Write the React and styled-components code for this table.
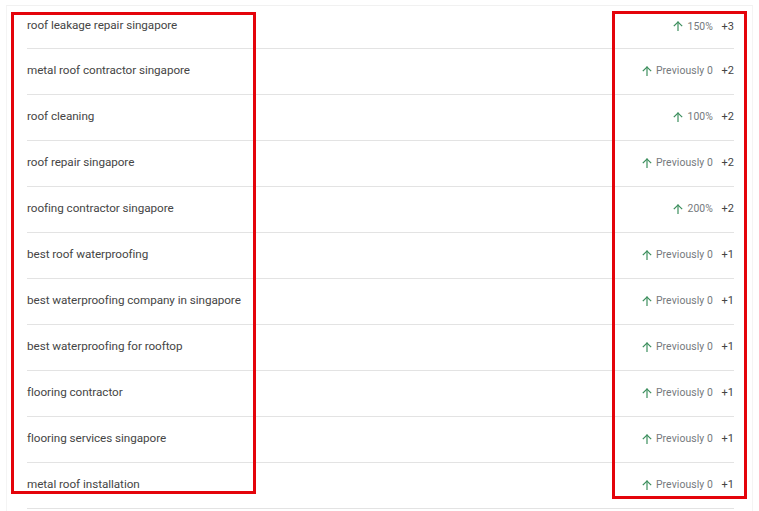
import React from "react";
import styled, { createGlobalStyle } from "styled-components";

const Global = createGlobalStyle`
  html, body { margin: 0; padding: 0; background: #fff; }
  body { font-family: Roboto, "Liberation Sans", Arial, sans-serif; }
`;

const Page = styled.div`
  position: relative;
  width: 759px;
  height: 511px;
  overflow: hidden;
  background: #fff;
`;

const Card = styled.div`
  margin: 5px 6px 0 6px;
  border-top: 1px solid #f1f1f1;
  border-left: 1px solid #f4f4f4;
  border-right: 1px solid #f4f4f4;
  padding: 0 18px 0 20px;
  height: 520px;
`;

const List = styled.ul`
  list-style: none;
  margin: 0;
  padding: 0;
`;

const Row = styled.li`
  display: flex;
  align-items: center;
  justify-content: space-between;
  height: 45px;
  border-bottom: 1px solid #e3e3e3;
  box-sizing: content-box;
  &:first-child { height: 42px; }
`;

const Keyword = styled.span`
  font-size: 11.7px;
  color: #454545;
  letter-spacing: -0.05px;
  margin-top: -4px;
`;

const Change = styled.div`
  display: flex;
  align-items: center;
  margin-top: -2px;
`;

const Arrow = styled.svg`
  width: 12px;
  height: 12px;
  margin-right: 3px;
  color: #3d8f5e;
`;

const Label = styled.span`
  font-size: 10.4px;
  color: #75797d;
  letter-spacing: 0.1px;
`;

const Delta = styled.span`
  font-size: 11px;
  color: #444;
  width: 21px;
  text-align: right;
`;

const Highlight = styled.div`
  position: absolute;
  border: 3px solid #e4040b;
  box-sizing: border-box;
  pointer-events: none;
`;

const rows = [
  ["roof leakage repair singapore", "150%", "+3"],
  ["metal roof contractor singapore", "Previously 0", "+2"],
  ["roof cleaning", "100%", "+2"],
  ["roof repair singapore", "Previously 0", "+2"],
  ["roofing contractor singapore", "200%", "+2"],
  ["best roof waterproofing", "Previously 0", "+1"],
  ["best waterproofing company in singapore", "Previously 0", "+1"],
  ["best waterproofing for rooftop", "Previously 0", "+1"],
  ["flooring contractor", "Previously 0", "+1"],
  ["flooring services singapore", "Previously 0", "+1"],
  ["metal roof installation", "Previously 0", "+1"],
];

const UpArrow = () => (
  <Arrow viewBox="0 0 24 24" fill="none" stroke="currentColor" strokeWidth="2.4" strokeLinecap="square">
    <path d="M12 21V4" />
    <path d="M4.5 11.5L12 4l7.5 7.5" />
  </Arrow>
);

export default function App() {
  return (
    <Page>
      <Global />
      <Card>
        <List>
          {rows.map(([k, l, d]) => (
            <Row key={k}>
              <Keyword>{k}</Keyword>
              <Change>
                <UpArrow />
                <Label>{l}</Label>
                <Delta>{d}</Delta>
              </Change>
            </Row>
          ))}
        </List>
      </Card>
      <Highlight style={{ left: 11, top: 12, width: 245, height: 482 }} />
      <Highlight style={{ left: 612, top: 11, width: 135, height: 488 }} />
    </Page>
  );
}
